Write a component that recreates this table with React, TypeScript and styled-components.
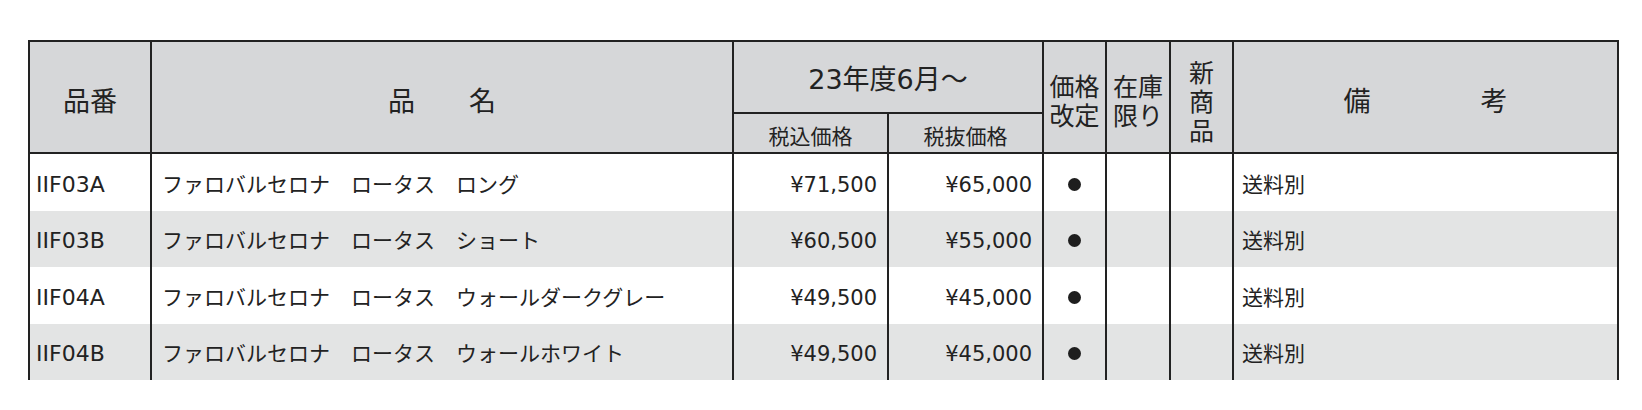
import styled, { createGlobalStyle } from "styled-components"

const GlobalStyle = createGlobalStyle`
  body {
    margin: 0;
    background: #fff;
    color: #222;
    font-family: "DejaVu Sans", "Noto Sans CJK JP", sans-serif;
  }
`

type Item = {
  code: string
  name: string
  withTax: string
  withoutTax: string
  revised: boolean
  note: string
}

const items: Item[] = [
  { code: "IIF03A", name: "ファロバルセロナ　ロータス　ロング", withTax: "¥71,500", withoutTax: "¥65,000", revised: true, note: "送料別" },
  { code: "IIF03B", name: "ファロバルセロナ　ロータス　ショート", withTax: "¥60,500", withoutTax: "¥55,000", revised: true, note: "送料別" },
  { code: "IIF04A", name: "ファロバルセロナ　ロータス　ウォールダークグレー", withTax: "¥49,500", withoutTax: "¥45,000", revised: true, note: "送料別" },
  { code: "IIF04B", name: "ファロバルセロナ　ロータス　ウォールホワイト", withTax: "¥49,500", withoutTax: "¥45,000", revised: true, note: "送料別" },
]

const widths = [122, 582, 155, 155, 63, 64, 63, 385]

export default function App() {
  return (
    <Page>
      <GlobalStyle />
      <Table>
        <colgroup>
          {widths.map((w, i) => (
            <col key={i} style={{ width: w }} />
          ))}
        </colgroup>
        <thead>
          <tr>
            <HeadCell rowSpan={2}>品番</HeadCell>
            <HeadCell rowSpan={2}>
              <Spread $gap={54}>
                <span>品</span>
                <span>名</span>
              </Spread>
            </HeadCell>
            <PeriodCell colSpan={2}>23年度6月～</PeriodCell>
            <NarrowHead rowSpan={2}>
              価格
              <br />
              改定
            </NarrowHead>
            <NarrowHead rowSpan={2}>
              在庫
              <br />
              限り
            </NarrowHead>
            <NarrowHead rowSpan={2}>
              新<br />商<br />品
            </NarrowHead>
            <HeadCell rowSpan={2}>
              <Spread $gap={110}>
                <span>備</span>
                <span>考</span>
              </Spread>
            </HeadCell>
          </tr>
          <tr>
            <SubHead>税込価格</SubHead>
            <SubHead>税抜価格</SubHead>
          </tr>
        </thead>
        <tbody>
          {items.map((x, i) => (
            <Row key={x.code} $shade={i % 2 === 1}>
              <CodeCell>{x.code}</CodeCell>
              <Cell $pad={10}>{x.name}</Cell>
              <Cell $align="right">{x.withTax}</Cell>
              <Cell $align="right">{x.withoutTax}</Cell>
              <Cell $align="center">{x.revised && <Dot />}</Cell>
              <Cell />
              <Cell />
              <Cell $pad={8}>{x.note}</Cell>
            </Row>
          ))}
        </tbody>
      </Table>
    </Page>
  )
}

const Page = styled.div`
  padding: 40px 0 0 28px;
`
const Table = styled.table`
  border-collapse: collapse;
  table-layout: fixed;
  width: 1591px;
`
const HeadCell = styled.th`
  background: #d6d7d9;
  border: 2px solid #222;
  padding: 6px 0 0;
  font-weight: normal;
  font-size: 27px;
  line-height: 32px;
  text-align: center;
  vertical-align: middle;
  font-family: "Noto Sans CJK JP", sans-serif;
`
const PeriodCell = styled(HeadCell)`
  height: 64px;
  font-size: 27px;
  font-family: "DejaVu Sans", "Noto Sans CJK JP", sans-serif;
`
const SubHead = styled(HeadCell)`
  height: 35px;
  padding-top: 3px;
  font-size: 21px;
  line-height: 26px;
`
const NarrowHead = styled(HeadCell)`
  padding: 6px 0 0;
  font-size: 25px;
  line-height: 29px;
`
const Spread = styled.span<{ $gap: number }>`
  display: inline-flex;
  gap: ${(p) => p.$gap}px;
`
const Row = styled.tr<{ $shade: boolean }>`
  background: ${(p) => (p.$shade ? "#e3e4e4" : "#fff")};
`
const Cell = styled.td<{ $align?: "left" | "right" | "center"; $pad?: number }>`
  height: 51.5px;
  padding: 5px ${(p) => (p.$align === "right" ? 10 : 0)}px 0
    ${(p) => (p.$align ? 0 : p.$pad ?? 6)}px;
  border-left: 2px solid #222;
  border-right: 2px solid #222;
  font-size: 21px;
  line-height: 28px;
  text-align: ${(p) => p.$align ?? "left"};
  vertical-align: middle;
  white-space: nowrap;
  overflow: hidden;
`
const CodeCell = styled(Cell)`
  font-size: 22px;
`
const Dot = styled.span`
  display: inline-block;
  width: 13px;
  height: 13px;
  margin-top: -3px;
  border-radius: 50%;
  background: #1e1e1e;
  vertical-align: middle;
`
